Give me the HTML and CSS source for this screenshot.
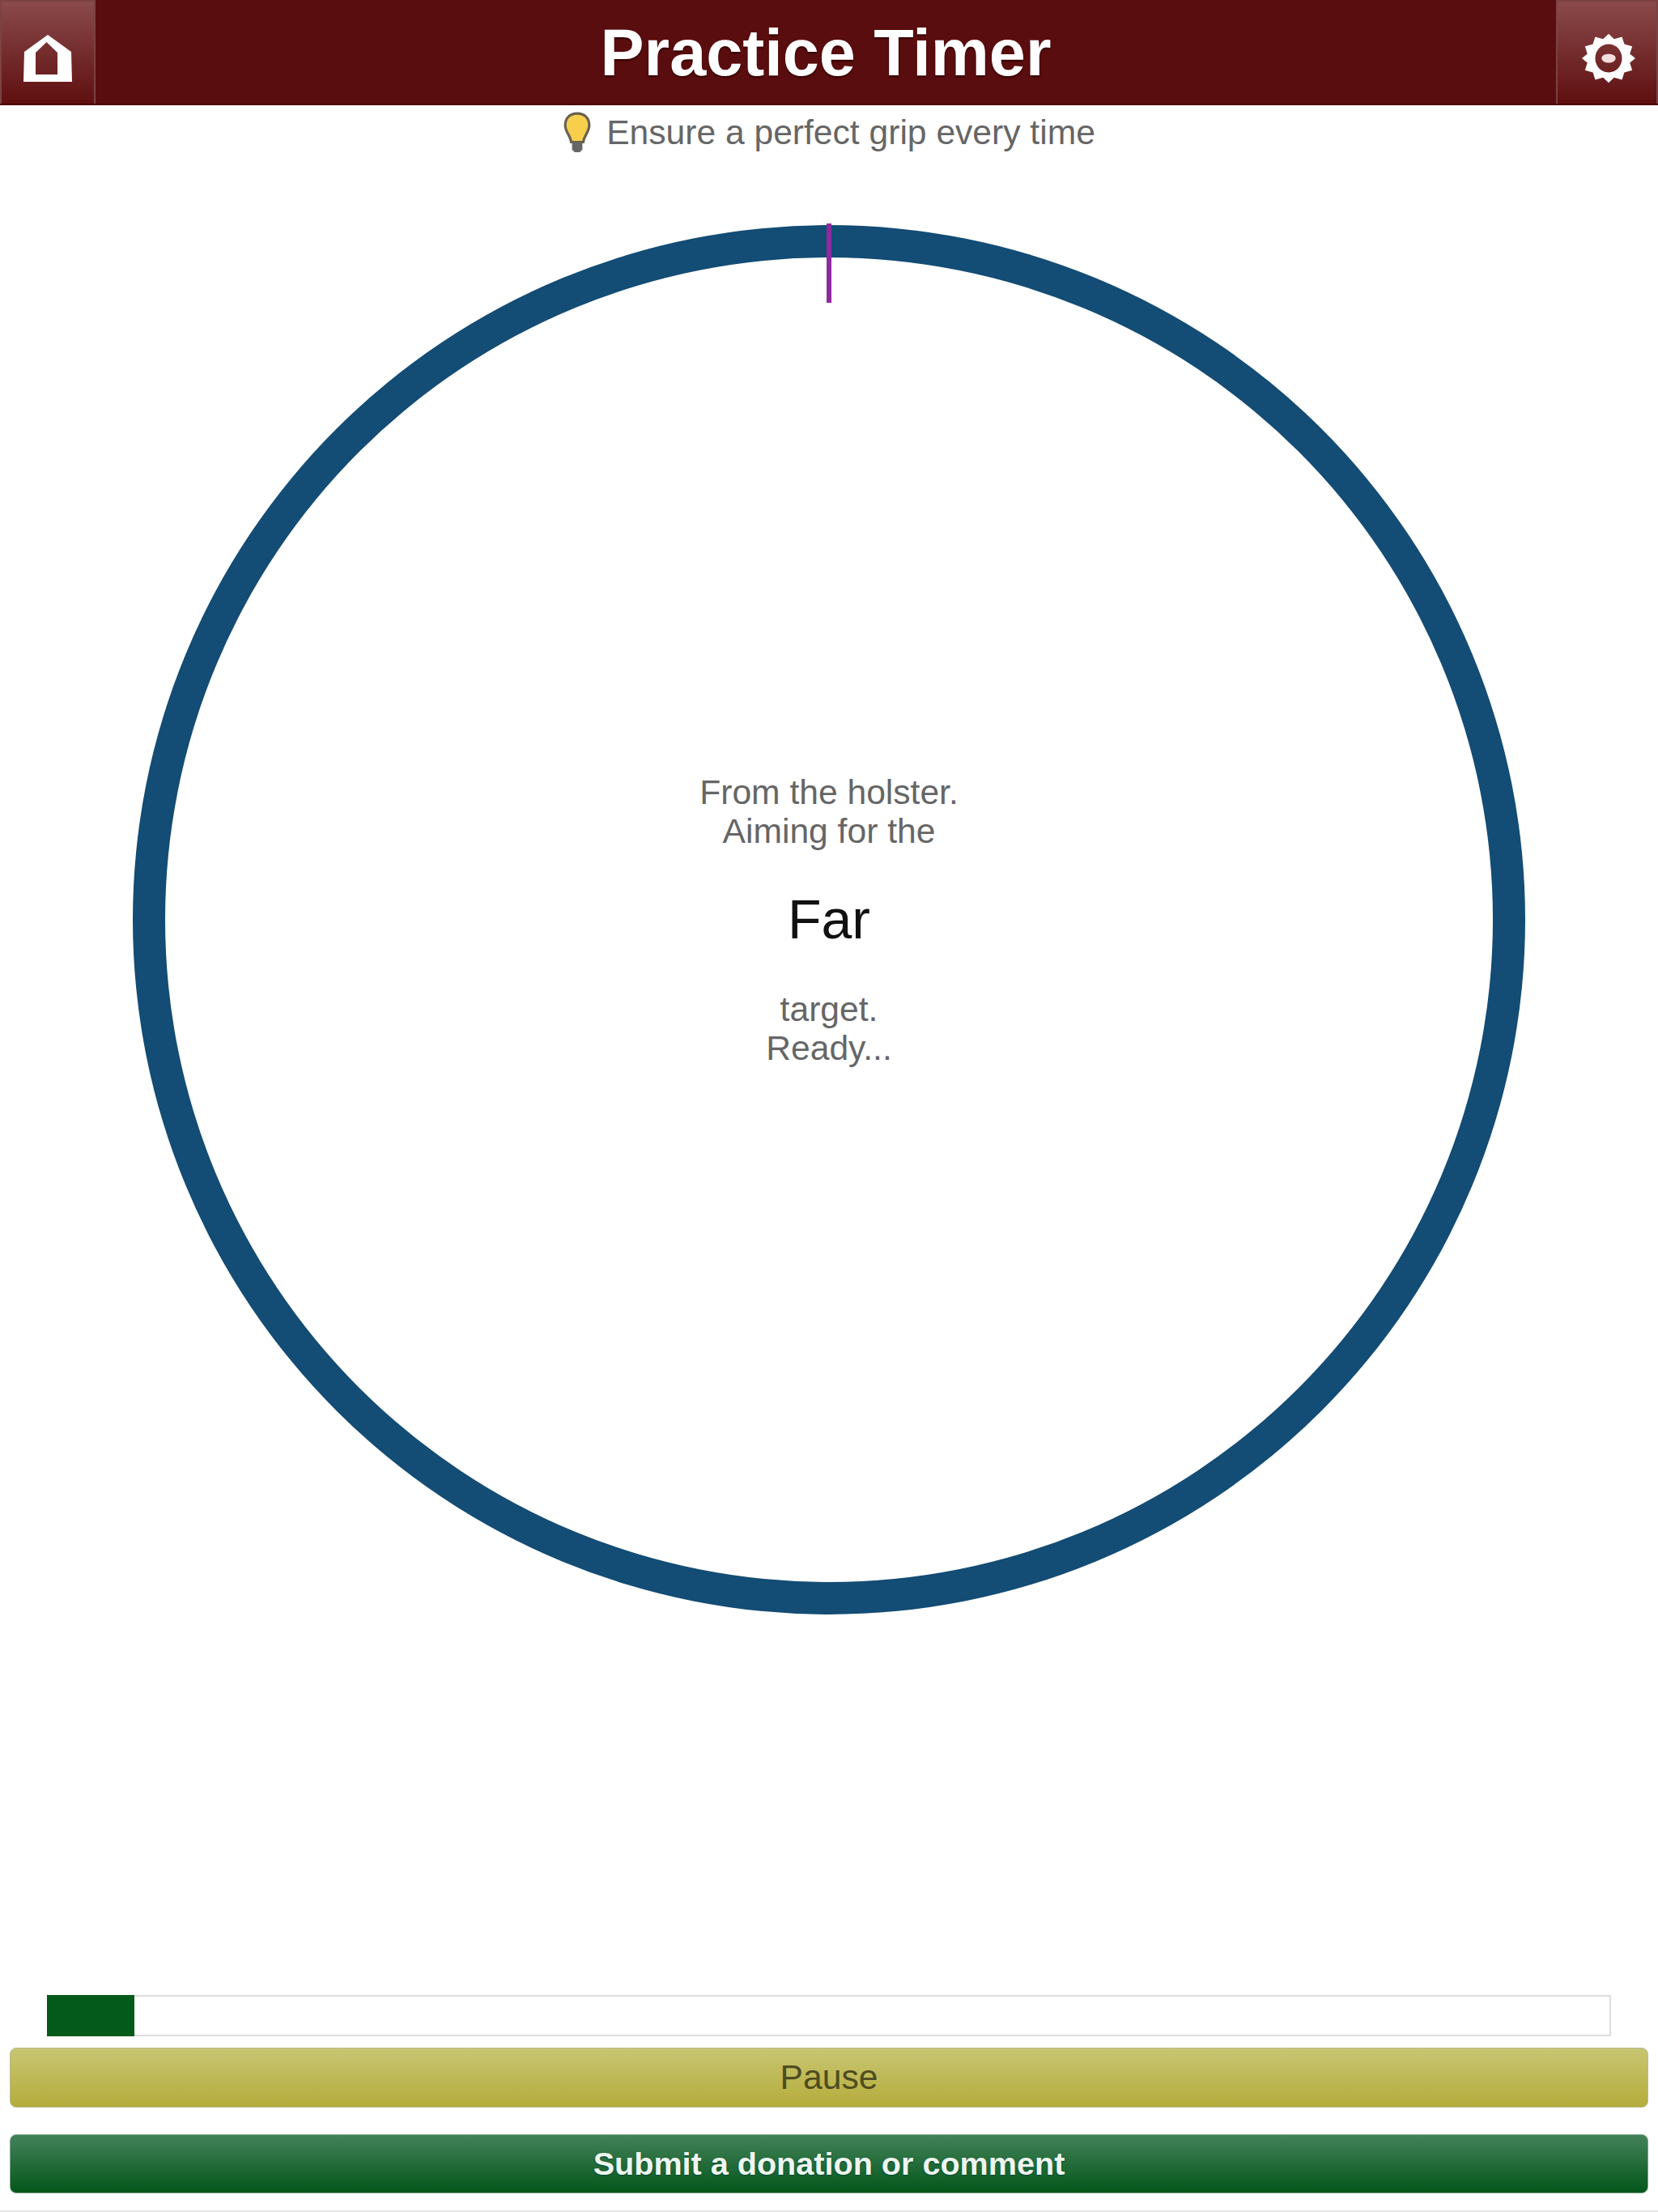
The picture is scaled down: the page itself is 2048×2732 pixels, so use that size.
FILE: index.html
```html
<!DOCTYPE html>
<html>
<head>
<meta charset="UTF-8">
<title>Practice Timer</title>
<link rel="stylesheet" href="styles.css">
</head>
<body>
    <header class="top-bar">
        <a class="bar-btn home-btn">
            <svg width="64" height="64" viewBox="0 0 64 64"><path d="M2 61L3 24 32 3 61 24 62 61z M17 52H44V25L30.500 12 17 25z" fill="#fff" fill-rule="evenodd"/></svg>
        </a>
        <h1>Practice Timer</h1>
        <a class="bar-btn settings-btn">
            <svg width="70" height="66" viewBox="0 0 72 72" preserveAspectRatio="none"><path d="M36 3l7 7 10-3 3 10 10 3-3 10 7 6-7 6 3 10-10 3-3 10-10-3-7 7-7-7-10 3-3-10-10-3 3-10-7-6 7-6-3-10 10-3 3-10 10 3z M36 17c-10 0-17 9-17 19s7 19 17 19 17-9 17-19-7-19-17-19z" fill="#fff" fill-rule="evenodd"/><ellipse cx="36" cy="36" rx="9" ry="6" fill="#f3dede"/></svg>
        </a>
    </header>
    <div class="tip">
        <svg width="36" height="52" viewBox="0 0 34 50" preserveAspectRatio="none"><path d="M17 2C8 2 3 8 3 16c0 8 6 12 7 20h14c1-8 7-12 7-20C31 8 26 2 17 2z" fill="#f7cf4d" stroke="#66624f" stroke-width="3"/><path d="M11 36h12v9l-3 3h-6l-3-3z" fill="#666"/></svg>
        <span>Ensure a perfect grip every time</span>
    </div>
    <div class="timer">
        <div class="ring">
            <div class="tick"></div>
            <div class="msg">From the holster.<br>Aiming for the</div>
            <div class="target">Far</div>
            <div class="msg">target.<br>Ready...</div>
        </div>
    </div>
    <div class="progress"><div class="progress-fill" style="width: 108px"></div></div>
    <a class="wide-btn pause-btn">Pause</a>
    <a class="wide-btn donate-btn">Submit a donation or comment</a>
</body>
</html>
```

FILE: styles.css
```css
html, body {
    margin: 0;
    padding: 0;
    background-color: #fff;
}
body {
    height: 2732px;
    overflow: hidden;
    font-family: "Liberation Sans", Arial, sans-serif;
    display: flex;
    flex-direction: column;
    border-bottom: 2px solid #e4e4e4;
    box-sizing: border-box;
}
.top-bar {
    display: flex;
    justify-content: space-between;
    align-items: stretch;
    height: 128px;
    background-color: #5a0d0e;
    border-bottom: 2px solid #4a0000;
    flex-shrink: 0;
}
.top-bar h1 {
    margin: 0;
    flex: 1;
    text-align: center;
    color: #fff;
    font-size: 81px;
    line-height: 131px;
    font-weight: bold;
    text-shadow: 0 2px 2px #300;
}
.bar-btn {
    display: flex;
    align-items: center;
    justify-content: center;
    width: 118px;
    padding-top: 13px;
    background: linear-gradient(#8a4a4b, #5f0f10);
    border: 2px solid #7c4243;
    border-width: 2px 2px 0 2px;
    box-sizing: border-box;
}
.settings-btn {
    width: 126px;
    padding-left: 4px;
}
.tip {
    display: flex;
    align-items: center;
    justify-content: center;
    gap: 18px;
    height: 67px;
    color: #666;
    font-size: 42.6px;
}
.timer {
    display: flex;
    justify-content: center;
    margin-top: 81px;
}
.ring {
    position: relative;
    width: 1720px;
    height: 1716px;
    box-sizing: border-box;
    border: 40px solid #134c74;
    border-radius: 50%;
    display: flex;
    flex-direction: column;
    align-items: center;
    justify-content: center;
    text-align: center;
}
.tick {
    position: absolute;
    top: -42px;
    left: 50%;
    width: 6px;
    height: 98px;
    margin-left: -3px;
    background-color: #8e2a9e;
}
.msg {
    color: #666;
    font-size: 42.6px;
    line-height: 48px;
}
.target {
    color: #111;
    font-size: 68px;
    line-height: 78px;
    margin: 46px 0 48px;
}
.progress {
    margin: 470px 58px 0 58px;
    height: 51px;
    border: 2px solid #ddd;
    box-sizing: border-box;
}
.progress-fill {
    height: 100%;
    margin: -2px 0 0 -2px;
    padding-bottom: 4px;
    background-color: #045a1a;
}
.wide-btn {
    display: block;
    margin: 14px 12px 0 12px;
    height: 74px;
    line-height: 70px;
    text-align: center;
    font-size: 42.6px;
    border-radius: 8px;
    box-sizing: border-box;
}
.pause-btn {
    color: #4f4c20;
    background: linear-gradient(#c8c673, #b4ac3a);
    border: 1px solid #bdb98f;
}
.donate-btn {
    margin-top: 33px;
    height: 73px;
    color: #eef5ee;
    font-size: 39.6px;
    font-weight: bold;
    background: linear-gradient(#44825a, #03561a);
    border: 1px solid #7da58b;
    text-shadow: 0 1px 2px #043;
}
```
